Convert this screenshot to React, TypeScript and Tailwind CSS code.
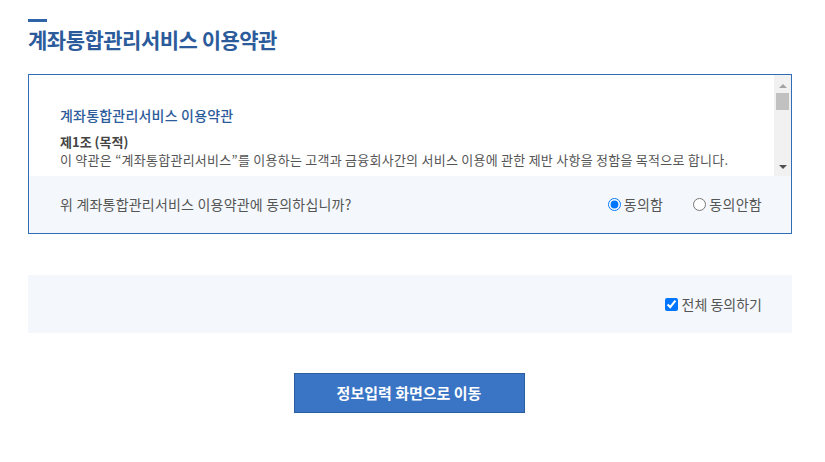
import { useState } from "react";

function ScrollBar() {
  return (
    <div className="flex w-[17px] shrink-0 flex-col items-center bg-[#f1f1f1]">
      <div className="mt-[9px] h-0 w-0 border-x-[4px] border-b-[4px] border-x-transparent border-b-[#a3a3a3]"></div>
      <div className="mt-[5px] h-[17px] w-[13px] bg-[#c1c1c1]"></div>
      <div className="flex-1"></div>
      <div className="mb-[7px] h-0 w-0 border-x-[4px] border-t-[4px] border-x-transparent border-t-[#505050]"></div>
    </div>
  );
}

export default function App() {
  const [agree, setAgree] = useState<"yes" | "no">("yes");
  const [allAgree, setAllAgree] = useState(true);

  return (
    <div
      className="w-[825px] bg-white pl-[28px] pt-[19px] pb-[50px]"
      style={{ fontFamily: '"Noto Sans CJK KR", "Noto Sans", sans-serif' }}
    >
      <div className="w-[764px]">
        {/* Title */}
        <div className="h-[3px] w-[19px] bg-[#2f64a8]"></div>
        <h1 className="mt-[2px] text-[21px] leading-[30px] font-bold tracking-[-0.5px] text-[#2c5b9b]">
          계좌통합관리서비스 이용약관
        </h1>

        {/* Terms box */}
        <div className="mt-[20px] border border-[#2f6db5]">
          <div className="flex h-[101px] bg-white">
            <div className="flex-1 overflow-hidden pl-[31px] pt-[30px]">
              <p className="text-[14px] leading-[20px] font-medium tracking-[0.2px] text-[#2c5b9b]">
                계좌통합관리서비스 이용약관
              </p>
              <p className="mt-[8px] text-[13px] leading-[18px] font-bold text-[#444]">제1조 (목적)</p>
              <p className="whitespace-nowrap text-[13px] leading-[17px] tracking-[0.25px] text-[#555]">
                이 약관은 “계좌통합관리서비스”를 이용하는 고객과 금융회사간의 서비스 이용에 관한 제반 사항을 정함을 목적으로 합니다.
              </p>
            </div>
            <ScrollBar />
          </div>
          <div className="flex h-[57px] items-center justify-between bg-[#f4f8fc] pl-[31px] pr-[29px]">
            <p className="text-[14px] tracking-[0.2px] text-[#555]">위 계좌통합관리서비스 이용약관에 동의하십니까?</p>
            <div className="flex items-center gap-[30px] text-[14px] tracking-[0.3px] text-[#555]">
              <label className="flex items-center gap-[3px]">
                <input
                  type="radio"
                  name="agree"
                  className="m-0 h-[13px] w-[13px]"
                  checked={agree === "yes"}
                  onChange={() => setAgree("yes")}
                />
                동의함
              </label>
              <label className="flex items-center gap-[3px]">
                <input
                  type="radio"
                  name="agree"
                  className="m-0 h-[13px] w-[13px]"
                  checked={agree === "no"}
                  onChange={() => setAgree("no")}
                />
                동의안함
              </label>
            </div>
          </div>
        </div>

        {/* All agree */}
        <div className="mt-[41px] flex h-[58px] items-center justify-end bg-[#f4f8fc] pr-[30px]">
          <label className="flex items-center gap-[4px] text-[14px] text-[#555]">
            <input
              type="checkbox"
              className="m-0 h-[13px] w-[13px]"
              checked={allAgree}
              onChange={(e) => setAllAgree(e.target.checked)}
            />
            전체 동의하기
          </label>
        </div>

        {/* Button */}
        <div className="mt-[40px] flex justify-center pr-[2px]">
          <button className="h-[40px] w-[231px] border border-[#2a5e9f] bg-[#3a75c5] text-[15px] font-bold text-white">
            정보입력 화면으로 이동
          </button>
        </div>
      </div>
    </div>
  );
}
